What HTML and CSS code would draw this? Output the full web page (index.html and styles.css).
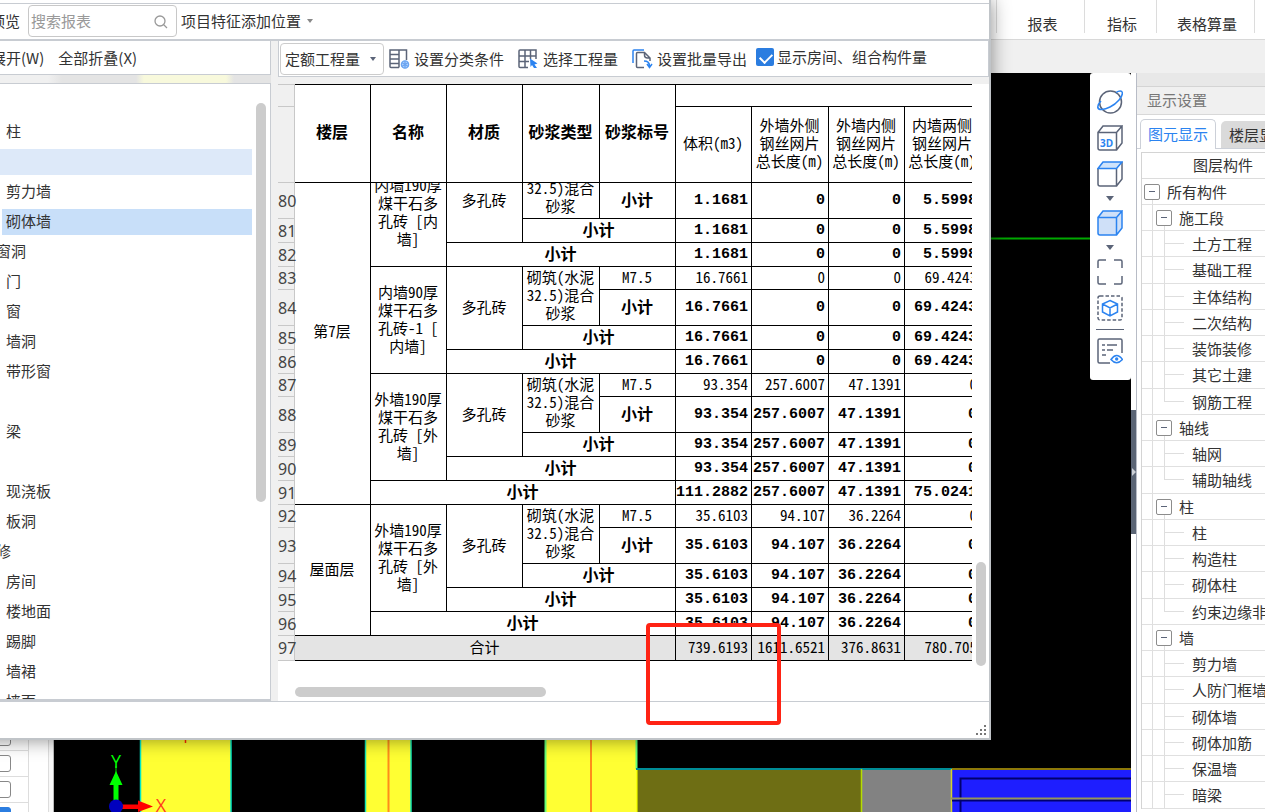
FILE: index.html
```html
<!DOCTYPE html>
<html lang="zh-CN">
<head>
<meta charset="utf-8">
<title>报表</title>
<link rel="stylesheet" href="styles.css">
</head>
<body>
<div class="app">
  <header class="ribbon">
    <button class="ribbon-item w-report">报表</button>
    <button class="ribbon-item w-index">指标</button>
    <button class="ribbon-item w-calc">表格算量</button>
    <span class="ribbon-tail"></span>
  </header>
  <div class="subbar"></div>

  <main class="work">
    <aside class="dock">
      <div class="dock-list">
        <label class="dock-row"><input type="checkbox" aria-label="图层一"></label>
        <label class="dock-row"><input type="checkbox" aria-label="图层二"></label>
        <label class="dock-row"><input type="checkbox" aria-label="图层三"></label>
        <label class="dock-row"><input type="checkbox" aria-label="图层四" checked></label>
      </div>
    </aside>

    <section class="viewport">
      <svg class="scene" viewBox="54 73 1077 739" preserveAspectRatio="xMinYMin slice" aria-hidden="true">
        <rect x="54" y="73" width="1077" height="739" fill="#000"/>
        <path d="M54 238.500H1131" stroke="#00a800" stroke-width="2"/>
        <rect x="140" y="700" width="91" height="112" fill="#ffff33"/>
        <path d="M140.500 700V812M231 700V812" stroke="#00e6c8" stroke-width="1.500"/>
        <path d="M185.500 700V743" stroke="#ff2a00" stroke-width="1.500"/>
        <rect x="366" y="700" width="45" height="112" fill="#ffff33"/>
        <path d="M365.500 700V812M411 700V812" stroke="#14e6b4" stroke-width="1.500"/>
        <path d="M388.500 700V812" stroke="#ff8c1a" stroke-width="2"/>
        <rect x="546" y="700" width="91" height="112" fill="#ffff33"/>
        <path d="M591 700V812" stroke="#ff8c1a" stroke-width="2"/>
        <path d="M545.500 700V812M636.500 700V769" stroke="#66ff77" stroke-width="2"/>
        <path d="M637 770V812" stroke="#f5ff00" stroke-width="1.500"/>
        <rect x="638" y="769" width="224" height="43" fill="#6e6e14"/>
        <rect x="862" y="769" width="90" height="43" fill="#828282"/>
        <rect x="952" y="769" width="179" height="43" fill="#1e1eff"/>
        <path d="M636 769H952" stroke="#008c96" stroke-width="2"/>
        <path d="M861.500 769V812" stroke="#b4dc00" stroke-width="1.500"/>
        <path d="M951.500 769V812" stroke="#d2d232" stroke-width="1.500"/>
        <path d="M952 769H1131" stroke="#8c780a" stroke-width="2"/>
        <path d="M960.500 812V778.500H1131M952 800.500H1131" fill="none" stroke="#00006e" stroke-width="2"/>
        <path d="M951 798.500H1131" stroke="#96965a" stroke-width="2"/>
        <path d="M116 766V774" stroke="#006e00" stroke-width="2"/>
        <path d="M113.500 802V785H109.500L116 771L122.500 785H118.500V802Z" fill="#00ff00"/>
        <path d="M122 804.500H138V800.500L153 806.500L138 812V809H122Z" fill="#ff0000"/>
        <circle cx="116" cy="806.500" r="7" fill="#0000be"/>
        <text class="axis" x="116" y="768" fill="#00ff00">Y</text>
        <text class="axis" x="161" y="812" fill="#ff3c1e">X</text>
      </svg>

      <nav class="viewbar" aria-label="视图">
        <button aria-label="动态观察"><svg viewBox="0 0 26 26"><circle class="g" cx="13.500" cy="13" r="11"/><path class="b" d="M19 3.500C22 1.500 25 1.500 25.300 3.500C26 7.500 20 14.500 13 18C7 21 1.500 21.500.800 18.500C.500 16.500 2 14 4 12"/></svg></button>
        <button aria-label="三维"><svg viewBox="0 0 26 26"><path class="g" d="M1 7.500H19.500V25H3Q1 25 1 23ZM1 7.500L6 1H25L19.500 7.500M25 1V18L19.500 25"/><text x="3" y="22" class="t3d">3D</text></svg></button>
        <button aria-label="俯视"><svg viewBox="0 0 26 26"><path d="M1 7.500L6 1H25L19.500 7.500Z" fill="#cfe3fb"/><path class="g" d="M1 7.500V23Q1 25 3 25H19.500V7.500M25 1V18L19.500 25"/><path class="b" d="M1 7.500L6 1H25L19.500 7.500Z"/></svg></button>
        <span class="tiny-caret"></span>
        <button aria-label="着色"><svg viewBox="0 0 26 26"><path d="M1 7.500L6 1H25V18L19.500 25H1Z" fill="#cfe0f8"/><path class="b" d="M1 7.500H19.500V25H3Q1 25 1 23ZM1 7.500L6 1H25L19.500 7.500M25 1V18L19.500 25"/></svg></button>
        <span class="tiny-caret"></span>
        <button aria-label="全屏"><svg viewBox="0 0 26 26"><path class="g" d="M1 9V2.500Q1 1 2.500 1H9M17 1H23.500Q25 1 25 2.500V9M25 17V23.500Q25 25 23.500 25H17M9 25H2.500Q1 25 1 23.500V17"/></svg></button>
        <button aria-label="局部三维"><svg viewBox="0 0 26 26"><rect class="g" x="1" y="1" width="24" height="24" rx="2" stroke-dasharray="3.500 2"/><path class="b" d="M13 5.500L20.500 9V17L13 21L5.500 17V9ZM5.500 9L13 13L20.500 9M13 13V21"/></svg></button>
        <span class="viewbar-rule"></span>
        <button aria-label="显示设置"><svg viewBox="0 0 26 26"><path class="g" d="M13 25H2.500Q1 25 1 23.500V2.500Q1 1 2.500 1H23.500Q25 1 25 2.500V15M5 7H8M10 7H20M5 12H8M10 12H16M5 17H9"/><path class="b" d="M14 21.500Q19.500 13.500 25.500 21.500Q19.500 28 14 21.500Z"/><circle cx="19.700" cy="21" r="1.700" fill="#2b83f0"/></svg></button>
      </nav>
    </section>

    <div class="splitter"><button class="splitter-grip" aria-label="折叠面板"></button></div>

    <aside class="panel">
      <div class="panel-strip"></div>
      <h2 class="panel-title">显示设置</h2>
      <div class="tabs">
        <button class="tab active">图元显示</button>
        <button class="tab">楼层显示</button>
      </div>
      <div class="layers">
        <div class="layer-head">图层构件</div>
        <ul class="layer-list">
          <li class="l0"><button class="box" aria-label="折叠"></button>所有构件</li>
          <li class="l1"><button class="box" aria-label="折叠"></button>施工段</li>
          <li class="l2">土方工程</li>
          <li class="l2">基础工程</li>
          <li class="l2">主体结构</li>
          <li class="l2">二次结构</li>
          <li class="l2">装饰装修</li>
          <li class="l2">其它土建</li>
          <li class="l2 last">钢筋工程</li>
          <li class="l1"><button class="box" aria-label="折叠"></button>轴线</li>
          <li class="l2">轴网</li>
          <li class="l2 last">辅助轴线</li>
          <li class="l1"><button class="box" aria-label="折叠"></button>柱</li>
          <li class="l2">柱</li>
          <li class="l2">构造柱</li>
          <li class="l2">砌体柱</li>
          <li class="l2 last">约束边缘非阴影区</li>
          <li class="l1"><button class="box" aria-label="折叠"></button>墙</li>
          <li class="l2">剪力墙</li>
          <li class="l2">人防门框墙</li>
          <li class="l2">砌体墙</li>
          <li class="l2">砌体加筋</li>
          <li class="l2">保温墙</li>
          <li class="l2">暗梁</li>
        </ul>
      </div>
    </aside>
  </main>
</div>

<section class="dialog">
  <div class="dialog-edge"></div>
  <div class="dialog-tools">
    <button class="plain preview">预览</button>
    <div class="search">
      <input type="text" placeholder="搜索报表" aria-label="搜索报表">
      <svg viewBox="0 0 14 14" aria-hidden="true"><circle cx="6" cy="6" r="5"/><path d="M9.500 9.500L13 13"/></svg>
    </div>
    <button class="plain position">项目特征添加位置<span class="caret"></span></button>
  </div>

  <div class="dialog-body">
    <div class="left">
      <div class="left-tools">
        <button class="plain">展开(W)</button>
        <button class="plain">全部折叠(X)</button>
      </div>
      <div class="glass"></div>
      <div class="tree">
        <ul class="tree-list">
          <li class="cat">柱</li>
          <li>柱</li>
          <li class="cat hover">墙</li>
          <li>剪力墙</li>
          <li class="selected">砌体墙</li>
          <li class="cat">门窗洞</li>
          <li>门</li>
          <li>窗</li>
          <li>墙洞</li>
          <li>带形窗</li>
          <li class="cat">梁</li>
          <li>梁</li>
          <li class="cat">板</li>
          <li>现浇板</li>
          <li>板洞</li>
          <li class="cat">装修</li>
          <li>房间</li>
          <li>楼地面</li>
          <li>踢脚</li>
          <li>墙裙</li>
          <li>墙面</li>
        </ul>
        <span class="tree-scroll"></span>
      </div>
    </div>

    <div class="right">
      <div class="right-tools">
        <span class="picker"><select aria-label="工程量类型"><option>定额工程量</option></select></span>
        <button class="plain tool"><svg viewBox="0 0 21 20"><path class="g" d="M10 18.500H2Q1 18.500 1 17.500V1H17.500V11M10 1V18.500M1 5.500H10M1 10H10M1 14.500H10"/><g stroke="#6aa5f2" stroke-width="1.400" fill="#b9d5fa"><circle cx="16" cy="15.500" r="3.600"/><path d="M12.800 13.500L19.200 17.500M12.800 17.500L19.200 13.500M16 11.800V19.200"/></g></svg>设置分类条件</button>
        <button class="plain tool"><svg viewBox="0 0 21 20"><path class="g" d="M10 18.500H2Q1 18.500 1 17.500V2Q1 1 2 1H18V10M7 1V18.500M12.500 1V10M1 7H18M1 12.500H11"/><path d="M12 9.500L19.500 14.500L16.500 15.500L19 19H16L14 16L12.500 18Z" fill="#2b83f0"/></svg>选择工程量</button>
        <button class="plain tool"><svg viewBox="0 0 21 20"><path class="b" d="M1 14V2Q1 1 2 1H12"/><path class="g" d="M12 18.500H5.500Q4.500 18.500 4.500 17.500V4.500Q4.500 3.500 5.500 3.500H12.500L18 9V12M12.500 3.500V6Q12.500 9 15.500 9H18"/><path class="b" d="M12 12Q17.500 12 17.500 17M15 15L17.500 18.500L20 15"/></svg>设置批量导出</button>
        <label class="check"><input type="checkbox" checked>显示房间、组合构件量</label>
      </div>

      <div class="grid">
        <table class="sheet sheet-head">
          <colgroup><col class="c-num"><col class="c"><col class="c"><col class="c"><col class="c wide"><col class="c"><col class="c"><col class="c wide"><col class="c"><col class="c"></colgroup>
          <thead>
            <tr class="r-top"><th class="num"></th><th rowspan="2">楼层</th><th rowspan="2">名称</th><th rowspan="2">材质</th><th rowspan="2">砂浆类型</th><th rowspan="2">砂浆标号</th><th colspan="4"></th></tr>
            <tr class="r-sub"><th class="num"></th><th class="unit">体积(m3)</th><th class="unit">外墙外侧<br>钢丝网片<br>总长度(m)</th><th class="unit">外墙内侧<br>钢丝网片<br>总长度(m)</th><th class="unit">内墙两侧<br>钢丝网片<br>总长度(m)</th></tr>
          </thead>
        </table>
        <div class="sheet-scroll">
        <table class="sheet sheet-body">
          <colgroup><col class="c-num"><col class="c"><col class="c"><col class="c"><col class="c wide"><col class="c"><col class="c"><col class="c wide"><col class="c"><col class="c"></colgroup>
          <tbody>
            <tr class="low"><th class="num"></th><td rowspan="13">第7层</td><td rowspan="4">内墙190厚<br>煤干石多<br>孔砖 [内<br>墙]</td><td rowspan="3">多孔砖</td><td rowspan="2">砌筑(水泥<br>32.5)混合<br>砂浆</td><td></td><td></td><td></td><td></td><td></td></tr>
            <tr class="tall sum"><th class="num">80</th><td>小计</td><td class="v">1.1681</td><td class="v">0</td><td class="v">0</td><td class="v">5.5998</td></tr>
            <tr class="sum"><th class="num">81</th><td colspan="2">小计</td><td class="v">1.1681</td><td class="v">0</td><td class="v">0</td><td class="v">5.5998</td></tr>
            <tr class="sum"><th class="num">82</th><td colspan="3">小计</td><td class="v">1.1681</td><td class="v">0</td><td class="v">0</td><td class="v">5.5998</td></tr>
            <tr class="low"><th class="num">83</th><td rowspan="4">内墙90厚<br>煤干石多<br>孔砖-1 [<br>内墙]</td><td rowspan="3">多孔砖</td><td rowspan="2">砌筑(水泥<br>32.5)混合<br>砂浆</td><td>M7.5</td><td class="v">16.7661</td><td class="v">0</td><td class="v">0</td><td class="v">69.4243</td></tr>
            <tr class="tall sum"><th class="num">84</th><td>小计</td><td class="v">16.7661</td><td class="v">0</td><td class="v">0</td><td class="v">69.4243</td></tr>
            <tr class="sum"><th class="num">85</th><td colspan="2">小计</td><td class="v">16.7661</td><td class="v">0</td><td class="v">0</td><td class="v">69.4243</td></tr>
            <tr class="sum"><th class="num">86</th><td colspan="3">小计</td><td class="v">16.7661</td><td class="v">0</td><td class="v">0</td><td class="v">69.4243</td></tr>
            <tr class="low"><th class="num">87</th><td rowspan="4">外墙190厚<br>煤干石多<br>孔砖 [外<br>墙]</td><td rowspan="3">多孔砖</td><td rowspan="2">砌筑(水泥<br>32.5)混合<br>砂浆</td><td>M7.5</td><td class="v">93.354</td><td class="v">257.6007</td><td class="v">47.1391</td><td class="v">0</td></tr>
            <tr class="tall sum"><th class="num">88</th><td>小计</td><td class="v">93.354</td><td class="v">257.6007</td><td class="v">47.1391</td><td class="v">0</td></tr>
            <tr class="sum"><th class="num">89</th><td colspan="2">小计</td><td class="v">93.354</td><td class="v">257.6007</td><td class="v">47.1391</td><td class="v">0</td></tr>
            <tr class="sum"><th class="num">90</th><td colspan="3">小计</td><td class="v">93.354</td><td class="v">257.6007</td><td class="v">47.1391</td><td class="v">0</td></tr>
            <tr class="sum"><th class="num">91</th><td colspan="4">小计</td><td class="v">111.2882</td><td class="v">257.6007</td><td class="v">47.1391</td><td class="v">75.0241</td></tr>
            <tr class="low"><th class="num">92</th><td rowspan="5">屋面层</td><td rowspan="4">外墙190厚<br>煤干石多<br>孔砖 [外<br>墙]</td><td rowspan="3">多孔砖</td><td rowspan="2">砌筑(水泥<br>32.5)混合<br>砂浆</td><td>M7.5</td><td class="v">35.6103</td><td class="v">94.107</td><td class="v">36.2264</td><td class="v">0</td></tr>
            <tr class="tall sum"><th class="num">93</th><td>小计</td><td class="v">35.6103</td><td class="v">94.107</td><td class="v">36.2264</td><td class="v">0</td></tr>
            <tr class="sum"><th class="num">94</th><td colspan="2">小计</td><td class="v">35.6103</td><td class="v">94.107</td><td class="v">36.2264</td><td class="v">0</td></tr>
            <tr class="sum"><th class="num">95</th><td colspan="3">小计</td><td class="v">35.6103</td><td class="v">94.107</td><td class="v">36.2264</td><td class="v">0</td></tr>
            <tr class="sum"><th class="num">96</th><td colspan="4">小计</td><td class="v">35.6103</td><td class="v">94.107</td><td class="v">36.2264</td><td class="v">0</td></tr>
            <tr class="total"><th class="num">97</th><td colspan="5">合计</td><td class="v">739.6193</td><td class="v">1611.6521</td><td class="v">376.8631</td><td class="v">780.705</td></tr>
          </tbody>
        </table>
        </div>
        <span class="grid-cover"></span>
        <span class="grid-vscroll"></span>
        <span class="grid-hscroll"></span>
      </div>
    </div>
  </div>

  <footer class="status">
    <svg viewBox="0 0 11 11" aria-hidden="true"><path d="M8 0h2v2h-2zM4 4h2v2h-2zM8 4h2v2h-2zM0 8h2v2h-2zM4 8h2v2h-2zM8 8h2v2h-2z"/></svg>
  </footer>
</section>
<div class="mark"></div>
</body>
</html>
```
FILE: styles.css
```css
* { box-sizing: border-box; }

body {
  margin: 0;
  height: 100vh;
  overflow: hidden;
  position: relative;
  font: 15px/20px "Noto Sans CJK SC", sans-serif;
  color: #333;
  background: #f0f0f0;
}

button, input, select {
  font: inherit;
  color: inherit;
  margin: 0;
}

button {
  padding: 0;
  border: 0;
  background: none;
  white-space: nowrap;
}

ul { list-style: none; margin: 0; padding: 0; }

.g { fill: none; stroke: #5b6478; stroke-width: 1.5; }
.b { fill: none; stroke: #2b83f0; stroke-width: 1.5; }

/* application behind the dialog */
.app { display: flex; flex-direction: column; height: 100%; }

.ribbon {
  display: flex;
  justify-content: flex-end;
  height: 40px;
  padding-bottom: 6px;
  background: #fff;
  border-bottom: 1px solid #d8d8d8;
}
.ribbon-item { border-left: 1px solid #dcdcdc; padding-top: 14px; }
.w-report { width: 88px; padding-left: 4px; }
.w-index { width: 72px; padding-left: 3px; }
.w-calc { width: 98px; padding-left: 3px; }
.ribbon-tail { width: 11px; border-left: 1px solid #dcdcdc; }
.subbar { height: 33px; background: #f0f0f0; }

.work { flex: 1; display: flex; min-height: 0; }

.dock {
  width: 54px;
  display: flex;
  align-items: flex-end;
  background: #fff;
  border-right: 1px solid #bbb;
  box-shadow: inset -4px 0 #f8f8f8, inset -5px 0 #ddd;
  overflow: hidden;
}
.dock-list {
  width: 29px;
  height: 87px;
  border-right: 1px solid #ddd;
}
.dock-row {
  display: flex;
  align-items: center;
  height: 26px;
  border-bottom: 1px solid #ddd;
}
.dock-row input {
  appearance: none;
  width: 17px;
  height: 17px;
  margin-left: -6px;
  border: 1px solid #888;
  border-radius: 3px;
  background: #fff;
}
.dock-row input:checked { background: #2b7de0; border-color: #2b7de0; }

.viewport { flex: 1; min-width: 0; position: relative; background: #000; overflow: hidden; }
.scene { display: block; width: 100%; height: 100%; }
.axis { font: 18px "Open Sans", sans-serif; text-anchor: middle; }

.viewbar {
  position: absolute;
  top: 0;
  right: 0;
  width: 41px;
  display: flex;
  flex-direction: column;
  align-items: center;
  gap: 10px;
  padding: 16px 1px 16px 0;
  background: #fff;
  border-radius: 3px;
}
.viewbar button { height: 26px; }
.viewbar svg { display: block; width: 26px; height: 26px; }
.t3d { font: bold 10px "Open Sans", sans-serif; fill: #2b83f0; }
.tiny-caret {
  border: 4px solid transparent;
  border-top: 5px solid #5b6478;
  border-bottom: 0;
  margin: -1px 0;
}
.viewbar-rule { width: 28px; height: 1px; margin: -2px 0; background: #5b6478; }

.splitter {
  width: 6px;
  display: flex;
  align-items: center;
  padding-top: 58px;
  background: #fff;
  border-right: 1px solid #b8bcc6;
}
.splitter-grip {
  width: 5px;
  height: 124px;
  background: #5b6575;
}
.splitter-grip::before {
  content: "";
  display: block;
  width: 0;
  margin: 0 auto;
  border: 4px solid transparent;
  border-left-color: #ccd0d6;
  border-right: 0;
}

.panel { width: 128px; overflow: hidden; background: #fff; }
.panel-strip { height: 14px; background: #e8e8e8; border-bottom: 1px solid #d4d4d4; }
.panel-title {
  margin: 0;
  height: 28px;
  padding: 3px 10px;
  font-size: 15px;
  font-weight: 400;
  color: #777;
  background: #f0f0f0;
  border-bottom: 1px solid #d8d8d8;
  white-space: nowrap;
}
.tabs {
  display: flex;
  align-items: flex-end;
  gap: 5px;
  height: 34px;
  padding-left: 3px;
  border-bottom: 1px solid #ccd0d8;
}
.tab {
  flex: none;
  width: 76px;
  height: 27px;
  border-radius: 5px 5px 0 0;
  background: #dadada;
}
.tab.active {
  height: 30px;
  margin-bottom: -1px;
  padding-bottom: 2px;
  color: #2b83f0;
  background: #fff;
  border: 1px solid #ccd0d8;
  border-bottom: 0;
}
.layers {
  margin: 3px 0 0 4px;
  border: 1px solid #d4d4d4;
  border-width: 1px 0 0 1px;
  white-space: nowrap;
}
.layer-head { height: 26px; padding: 2px 0 0 51px; border-bottom: 1px solid #dcdcdc; }
.layer-list li {
  position: relative;
  display: flex;
  align-items: center;
  height: 26px;
  border-bottom: 1px solid #e0e0e0;
}
.layer-list li:nth-child(4n) { height: 27px; }
.layer-list li::before,
.layer-list li::after { content: ""; position: absolute; background: #dedede; }
.layer-list li::before { left: 10px; top: 0; bottom: 0; width: 1px; }
.layer-list .l0::before { top: 50%; }
.box {
  position: relative;
  z-index: 1;
  width: 16px;
  height: 16px;
  border: 1px solid #8c8c8c;
  border-radius: 2px;
  background: #fff;
}
.box::before { content: ""; display: block; width: 6px; height: 1px; margin: 0 auto; background: #5b6478; }
.l0 { padding-left: 2px; gap: 7px; }
.l1 { padding-left: 14px; gap: 7px; }
.layer-list .l1::after { left: 22px; top: 50%; bottom: 0; width: 1px; }
.l2 { padding-left: 50px; }
.layer-list .l2::after {
  left: 22px;
  top: 0;
  bottom: 0;
  width: 20px;
  background: linear-gradient(#dedede, #dedede) 0 0 / 1px 100% no-repeat,
              linear-gradient(#dedede, #dedede) 0 12px / 20px 1px no-repeat;
}
.layer-list .l2.last::after { bottom: 50%; }

/* report dialog, partly beyond the left edge of the window */
.dialog {
  position: absolute;
  left: -60px;
  right: 274px;
  top: 0;
  bottom: 72px;
  display: flex;
  flex-direction: column;
  background: #f0f0f0;
  border: 2px solid #c0c4c8;
  border-width: 0 2px 2px 0;
  box-shadow: 0 0 18px rgba(0, 0, 0, .45);
}
.plain { display: inline-flex; align-items: center; }
.dialog-edge { height: 4px; background: #fff; border-bottom: 1px solid #c8ccd2; flex: none; }
.dialog-tools {
  flex: none;
  display: flex;
  align-items: center;
  height: 37px;
  padding: 0 0 2px 50px;
  background: #fff;
  border-bottom: 2px solid #c8ccd2;
}
.search {
  position: relative;
  width: 149px;
  margin-left: 8px;
}
.search input {
  display: block;
  width: 100%;
  height: 32px;
  padding: 0 30px 0 2px;
  border: 1px solid #c8c8c8;
  border-radius: 4px;
  background: #fff;
}
.search input::placeholder { color: #999; opacity: 1; }
.search svg {
  position: absolute;
  right: 9px;
  top: 10px;
  width: 14px;
  height: 14px;
  fill: none;
  stroke: #999;
  stroke-width: 1.3;
}
.position { margin-left: 4px; gap: 6px; }
.caret { border: 3px solid transparent; border-top: 4px solid #888; border-bottom: 0; }

.dialog-body { flex: 1; min-height: 0; display: flex; gap: 7px; }

.left { width: 331px; display: flex; flex-direction: column; flex: none; }
.left-tools {
  display: flex;
  gap: 14px;
  height: 34px;
  padding-left: 50px;
  background: #fff;
  border: 1px solid #c8ccd2;
  border-top: 0;
}
.glass {
  height: 8px;
  background: linear-gradient(90deg, #f0f0f0 108px, #e4e4e4 122px, #e4e4e4 196px, #f8f9dc 204px, #f8f9dc 286px, #e4e4e4 294px);
}
.tree {
  flex: 1;
  min-height: 0;
  display: flex;
  justify-content: space-between;
  overflow: hidden;
  background: #fff;
  border: 1px solid #c8ccd2;
  border-bottom-width: 2px;
}
.tree-list { width: 311px; display: flex; flex-direction: column; gap: 4px; padding-top: 5px; }
.tree-list li { flex: none; height: 26px; line-height: 24px; margin-left: 61px; padding-left: 4px; }
.tree-list .cat { margin-left: 36px; }
.tree-list .hover { background: #dde9f9; }
.tree-list .selected { background: #c8dff9; }
.tree-scroll { width: 10px; height: 399px; margin: 19px 4px 0 0; border-radius: 5px; background: #ccc; }

.right { flex: 1; min-width: 0; display: flex; flex-direction: column; }
.right-tools {
  display: flex;
  align-items: center;
  height: 36px;
  padding-left: 1px;
  background: #fff;
  border: 1px solid #c8ccd2;
  border-top: 0;
  white-space: nowrap;
}
.picker { position: relative; width: 104px; margin-right: 5px; flex: none; }
.picker select {
  display: block;
  appearance: none;
  width: 100%;
  height: 32px;
  padding: 0 20px 0 4px;
  border: 1px solid #ccc;
  border-radius: 4px;
  background: #fff;
}
.picker::after {
  content: "";
  position: absolute;
  right: 8px;
  top: 14px;
  border: 3px solid transparent;
  border-top: 4px solid #5b6478;
  border-bottom: 0;
}
.tool { gap: 4px; margin-right: 14px; }
.tool svg { width: 21px; height: 20px; }
.check { display: flex; align-items: center; gap: 3px; margin: 0 0 4px -5px; }
.check input {
  appearance: none;
  width: 18px;
  height: 18px;
  border-radius: 2px;
  background: #2b7de0;
}
.check input:checked::before {
  content: "";
  display: block;
  width: 10px;
  height: 6px;
  margin: 5px 0 0 4px;
  border: 2px solid #fff;
  border-width: 0 0 2px 2px;
  transform: rotate(-45deg);
}

.grid {
  position: relative;
  flex: 1;
  min-height: 0;
  margin-top: 7px;
  overflow: hidden;
  background: #fff;
}
.sheet {
  width: 703px;
  table-layout: fixed;
  border-collapse: separate;
  border-spacing: 0;
  color: #000;
  font: 15px/18px "Noto Sans Mono CJK SC", "Noto Sans CJK SC", monospace;
}
.c-num { width: 17px; }
.c { width: 76px; }
.c.wide { width: 77px; }
.sheet th, .sheet td {
  height: 24px;
  padding: 0 1px 3px 0;
  border: 1px solid #000;
  border-width: 0 1px 1px 0;
  text-align: center;
  vertical-align: middle;
  white-space: nowrap;
}
.sheet-head th { padding-bottom: 6px; font-size: 16px; font-weight: 700; }
.sheet-head .r-top th { height: 23px; border-top-width: 1px; }
.sheet-head .r-sub th { height: 76px; }
.sheet-head .unit { padding-bottom: 4px; font-size: 15px; font-weight: 400; }
.sheet th.num {
  padding: 0;
  font: 16px/18px "Noto Sans", sans-serif;
  color: #444;
  background: #f0f0f0;
  border-color: #c8c8c8;
}
.sheet-scroll { overflow: hidden; }
/* first visible row starts one low row down */
.sheet-body { margin-top: -23px; }
.sheet .low th, .sheet .low td { height: 23px; }
.sheet .tall th, .sheet .tall td { height: 36px; }
.sheet .sum td { padding-bottom: 4px; font-size: 16px; font-weight: 700; }
.sheet .total td { height: 25px; background: #e4e4e4; }
.sheet td.v { padding-right: 3px; text-align: right; }
.sheet .sum td.v { padding-bottom: 0; font-family: "Liberation Mono", monospace; font-size: 15px; }
.grid-cover { position: absolute; right: 0; top: 0; bottom: 0; width: 17px; background: #fff; }
.grid-vscroll {
  position: absolute;
  right: 3px;
  top: 478px;
  width: 10px;
  height: 104px;
  border-radius: 5px;
  background: #ccc;
}
.grid-hscroll {
  position: absolute;
  left: 17px;
  bottom: 4px;
  width: 251px;
  height: 10px;
  border-radius: 5px;
  background: #ccc;
}

.status {
  flex: none;
  display: flex;
  justify-content: flex-end;
  align-items: flex-end;
  height: 37px;
  padding: 0 2px 2px;
  background: #fff;
  border-top: 1px solid #c8ccd2;
}
.status svg { width: 11px; height: 11px; fill: #777; }

.mark {
  position: absolute;
  left: 646px;
  top: 623px;
  width: 135px;
  height: 102px;
  border: 4px solid #ff2314;
  border-radius: 4px;
}
```
